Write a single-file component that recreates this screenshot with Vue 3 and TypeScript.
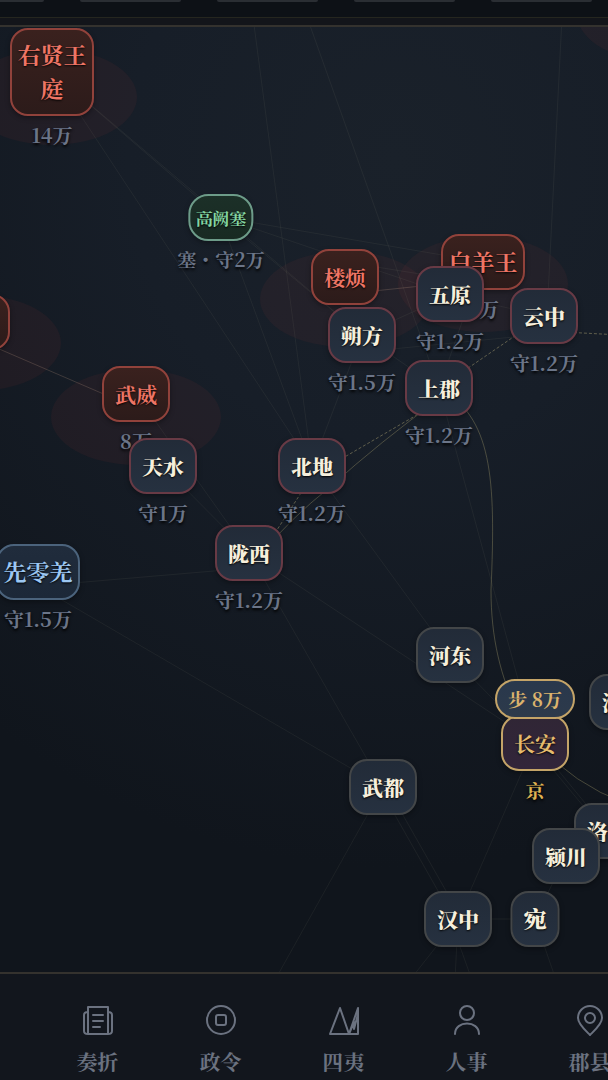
<script setup lang="ts">
type Kind = 'han' | 'border' | 'foe' | 'fort' | 'qiang' | 'capital'

interface Place {
  name: string
  x: number
  y: number
  kind: Kind
  note?: string
}

interface Road {
  d: string
  style?: 'bright' | 'dash' | 'march'
}

const places: Place[] = [
  { name: '右贤王庭', x: 52, y: 1, kind: 'foe', note: '14万' },
  { name: '', x: -24, y: 267, kind: 'foe' },
  { name: '武威', x: 136, y: 339, kind: 'foe', note: '8万' },
  { name: '高阙塞', x: 221, y: 167, kind: 'fort', note: '塞・守2万' },
  { name: '白羊王', x: 483, y: 207, kind: 'foe', note: '8万' },
  { name: '楼烦', x: 345, y: 222, kind: 'foe' },
  { name: '五原', x: 450, y: 239, kind: 'border', note: '守1.2万' },
  { name: '云中', x: 544, y: 261, kind: 'border', note: '守1.2万' },
  { name: '朔方', x: 362, y: 280, kind: 'border', note: '守1.5万' },
  { name: '上郡', x: 439, y: 333, kind: 'border', note: '守1.2万' },
  { name: '天水', x: 163, y: 411, kind: 'border', note: '守1万' },
  { name: '北地', x: 312, y: 411, kind: 'border', note: '守1.2万' },
  { name: '陇西', x: 249, y: 498, kind: 'border', note: '守1.2万' },
  { name: '先零羌', x: 38, y: 517, kind: 'qiang', note: '守1.5万' },
  { name: '河东', x: 450, y: 600, kind: 'han' },
  { name: '河内', x: 623, y: 647, kind: 'han' },
  { name: '长安', x: 535, y: 688, kind: 'capital', note: '京' },
  { name: '武都', x: 383, y: 732, kind: 'han' },
  { name: '洛阳', x: 608, y: 776, kind: 'han' },
  { name: '颍川', x: 566, y: 801, kind: 'han' },
  { name: '汉中', x: 458, y: 864, kind: 'han' },
  { name: '宛', x: 535, y: 864, kind: 'han' },
]

const realms = [
  { x: 52, y: 70 },
  { x: -24, y: 316 },
  { x: 136, y: 390 },
  { x: 345, y: 272 },
  { x: 483, y: 257 },
  { x: 662, y: -13 },
]

const roads: Road[] = [
  { d: 'M253 -10L312 439' },
  { d: 'M307 -10L439 361' },
  { d: 'M562 -10L547 289' },
  { d: 'M52 45L312 439' },
  { d: 'M52 45L220 190' },
  { d: 'M52 45L362 308' },
  { d: 'M220 190L483 235' },
  { d: 'M220 190L450 268' },
  { d: 'M220 190L362 308' },
  { d: 'M220 190L312 439' },
  { d: 'M345 267L450 256', style: 'bright' },
  { d: 'M345 235L483 257' },
  { d: 'M362 308L450 268' },
  { d: 'M362 325L544 307' },
  { d: 'M362 308L312 439' },
  { d: 'M362 308L439 361' },
  { d: 'M450 268L544 289' },
  { d: 'M483 235L439 361' },
  { d: 'M-24 312L136 381', style: 'bright' },
  { d: 'M136 367L249 526' },
  { d: 'M163 439L249 526' },
  { d: 'M38 559L249 541' },
  { d: 'M38 559L383 760' },
  { d: 'M249 526L383 760' },
  { d: 'M249 526L535 715' },
  { d: 'M312 439L450 628' },
  { d: 'M439 361L535 715' },
  { d: 'M450 628L535 715' },
  { d: 'M383 760L275 953' },
  { d: 'M379 760L454 892' },
  { d: 'M387 760L462 892' },
  { d: 'M535 715L458 892' },
  { d: 'M535 715L608 804' },
  { d: 'M530 715L604 804' },
  { d: 'M458 892H535' },
  { d: 'M535 892L566 829' },
  { d: 'M458 892L410 953' },
  { d: 'M458 892L455 953' },
  { d: 'M450 892L472 953' },
  { d: 'M535 892L556 953' },
  { d: 'M439 361L544 289', style: 'dash' },
  { d: 'M544 304L640 309', style: 'dash' },
  { d: 'M439 375L312 449', style: 'dash' },
  { d: 'M312 449L262 526', style: 'dash' },
  { d: 'M439 372Q380 415 330 460Q290 492 262 526', style: 'march' },
  { d: 'M439 361C492 390 496 450 491 563C491 610 500 650 520 690', style: 'march' },
  { d: 'M535 715Q575 758 625 776', style: 'march' },
]

const tabs = [
  { label: '奏折', icon: 'M6 3H26V30H6ZM6 8Q2 8 2 11V27Q2 30 6 30M26 8Q30 8 30 11V27Q30 30 26 30M11 11H21M11 17H21M11 23H18' },
  { label: '政令', icon: 'M16 2A14 14 0 1 0 16 30A14 14 0 1 0 16 2ZM13 11H19Q21 11 21 13V19Q21 21 19 21H13Q11 21 11 19V13Q11 11 13 11Z' },
  { label: '四夷', icon: 'M2 30L12 4L21 30L30 4V30M2 30H30M21 30L26 18V25L30 10' },
  { label: '人事', icon: 'M16 2A7 7 0 1 0 16 16A7 7 0 1 0 16 2ZM4 30C4 16 28 16 28 30' },
  { label: '郡县', icon: 'M16 31C11 26 4 20 4 14A12 12 0 0 1 28 14C28 20 21 26 16 31ZM16 9A5 5 0 1 0 16 19A5 5 0 1 0 16 9Z' },
]
</script>

<template>
  <div class="game">
    <header class="top">
      <div class="chips"><span v-for="n in 5" :key="n" class="chip"></span></div>
      <div class="rail"></div>
    </header>

    <main class="map">
      <svg class="terrain" aria-hidden="true">
        <ellipse v-for="(r, i) in realms" :key="'e' + i" class="realm" :cx="r.x" :cy="r.y" rx="85" ry="48" />
        <path v-for="(r, i) in roads" :key="i" :class="['road', r.style]" :d="r.d" />
      </svg>
      <div
        v-for="(p, i) in places"
        :key="i"
        class="place"
        :class="[p.kind, { wide: p.name.length > 2, tall: p.name.length > 3, solo: p.name.length === 1 }]"
        :style="{ left: p.x + 'px', top: p.y + 'px' }"
      >
        <button type="button" class="seal">{{ p.name }}</button>
        <span v-if="p.note" class="note">{{ p.note }}</span>
      </div>
      <button type="button" class="army">步 8万</button>
    </main>

    <nav class="tabs">
      <button v-for="t in tabs" :key="t.label" type="button" class="tab">
        <svg viewBox="0 0 32 32" class="icon" aria-hidden="true"><path :d="t.icon" /></svg>
        <span>{{ t.label }}</span>
      </button>
    </nav>
  </div>
</template>

<style>
body {
  margin: 0;
  background: #10141b;
}
</style>

<style scoped>
.game {
  display: flex;
  flex-direction: column;
  min-height: 100vh;
  overflow: hidden;
  font-family: "Noto Serif SC", "Noto Serif CJK SC", "Liberation Serif", "Noto Sans CJK SC", serif;
}
.top {
  background: #0d1116;
  border-bottom: 2px solid #34322e;
}
.chips {
  display: flex;
  gap: 36px;
  height: 17px;
  margin-left: -57px;
  border-bottom: 1px solid #25261f;
}
.chip {
  flex: 0 0 101px;
  height: 2px;
  background: #2a2e33;
  border-radius: 0 0 4px 4px;
}
.rail {
  height: 7px;
  background: #13151a;
}
.map {
  position: relative;
  flex: 1 0 945px;
  overflow: hidden;
  background: radial-gradient(ellipse 110% 75% at 65% 14%, #1a212a, #171e28 40%, #10151c);
}
.terrain {
  position: absolute;
  inset: 0;
  width: 100%;
  height: 100%;
}
.realm {
  fill: #a03c32;
  fill-opacity: 0.09;
}
.road {
  fill: none;
  stroke: #a09884;
  stroke-opacity: 0.09;
}
.road.bright {
  stroke: #a08070;
  stroke-opacity: 0.3;
}
.road.dash {
  stroke: #a89e70;
  stroke-opacity: 0.5;
  stroke-dasharray: 3 2;
}
.road.march {
  stroke: #a09868;
  stroke-opacity: 0.38;
}
.place {
  position: absolute;
  display: flex;
  flex-direction: column;
  align-items: center;
  transform: translateX(-50%);
}
.seal {
  box-sizing: border-box;
  width: 68px;
  min-height: 56px;
  padding: 9px 0;
  border: 2px solid #434648;
  border-radius: 18px;
  background: linear-gradient(#222b38, #263140);
  color: #f6efdc;
  font-family: inherit;
  font-size: 21px;
  font-weight: 900;
  line-height: 34px;
  text-align: center;
  text-shadow: 0 1px 2px #000;
  box-shadow: 0 2px 5px rgba(0, 0, 0, 0.35);
}
.wide .seal {
  width: 84px;
  font-size: 23px;
}
.tall .seal {
  padding: 8px 4px;
}
.solo .seal {
  width: 49px;
  font-size: 23px;
}
.border .seal {
  border-color: #683a45;
}
.foe .seal {
  border-color: #91423b;
  background: linear-gradient(#3a211e, #2c1b1a);
  color: #ee7565;
  font-weight: 700;
}
.qiang .seal {
  border-color: #4b637c;
  background: linear-gradient(#202c3c, #1c2838);
  color: #9cc7f2;
  font-weight: 700;
}
.fort .seal {
  width: 65px;
  min-height: 47px;
  padding: 4px 0;
  border-color: #6d9c89;
  border-radius: 20px;
  background: linear-gradient(#1c3028, #182a22);
  color: #84d6a2;
  font-size: 17px;
  font-weight: 700;
}
.capital .seal {
  border-color: #c4a468;
  background: linear-gradient(#302635, #32253a);
  color: #e5bb6e;
  font-weight: 700;
}
.note {
  margin-top: 6px;
  color: #6b7588;
  font-size: 20px;
  font-weight: 700;
  line-height: 26px;
  white-space: nowrap;
  text-shadow: 0 2px 3px #000;
}
.fort .note {
  margin-top: 5px;
  font-size: 19px;
}
.capital .note {
  color: #e0b452;
  font-size: 19px;
}
.army {
  position: absolute;
  left: 495px;
  top: 652px;
  box-sizing: border-box;
  width: 80px;
  height: 40px;
  padding: 0;
  border: 2px solid #c4a468;
  border-radius: 20px;
  background: linear-gradient(#29384c, #2d3a4b);
  color: #dbb36d;
  font-family: inherit;
  font-size: 19px;
  font-weight: 700;
  line-height: 36px;
}
.tabs {
  display: flex;
  height: 106px;
  padding-left: 36px;
  border-top: 2px solid #34322e;
  background: #12161d;
}
.tab {
  display: flex;
  flex: 0 0 123px;
  flex-direction: column;
  align-items: center;
  gap: 10px;
  padding: 30px 0 0;
  border: 0;
  background: none;
  color: #6b7280;
  font-family: inherit;
  font-size: 21px;
  font-weight: 700;
  line-height: 30px;
}
.icon {
  width: 32px;
  height: 32px;
  fill: none;
  stroke: currentColor;
  stroke-width: 2;
  stroke-linejoin: round;
  stroke-linecap: round;
}
</style>
